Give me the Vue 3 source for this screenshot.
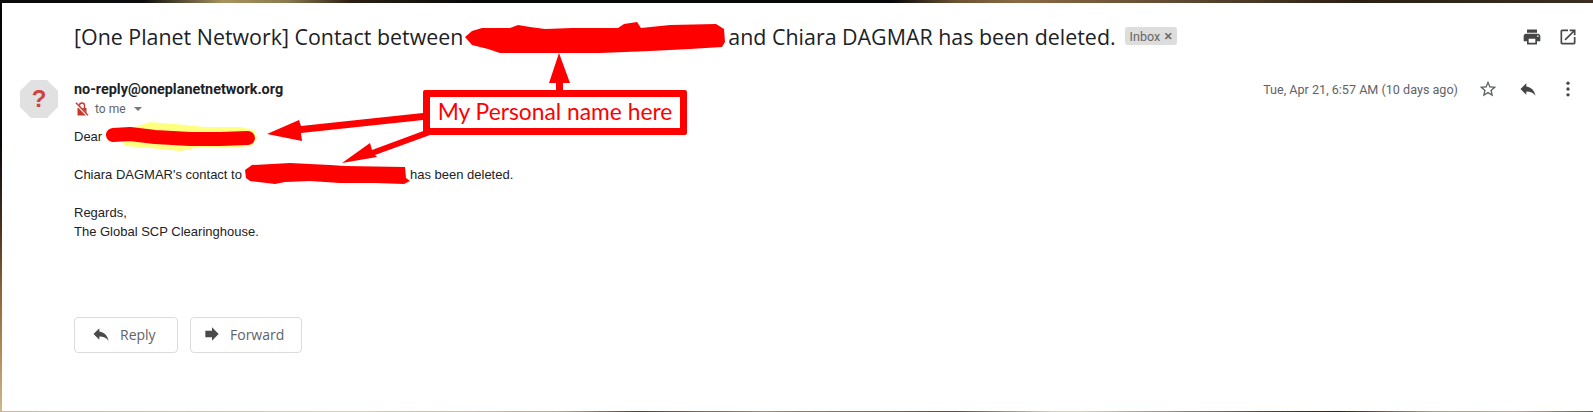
<script setup>
</script>

<template>
  <div class="frame">
    <div class="edge-top"></div>
    <div class="middle">
      <div class="edge-left"></div>
      <main class="mail">
        <header class="subject-row">
          <h1 class="subject">
            [One Planet Network] Contact between<span class="gap-subject"></span>and Chiara DAGMAR has been deleted.
          </h1>
          <span class="chip">Inbox<span class="chip-x">×</span></span>
          <div class="subject-actions">
            <svg class="icon print" viewBox="0 0 24 24"><path d="M19 8H5c-1.66 0-3 1.34-3 3v6h4v4h12v-4h4v-6c0-1.66-1.34-3-3-3zm-3 11H8v-5h8v5zm3-7c-.55 0-1-.45-1-1s.45-1 1-1 1 .45 1 1-.45 1-1 1zm-1-9H6v4h12V3z"/></svg>
            <svg class="icon print" viewBox="0 0 24 24"><path d="M19 19H5V5h7V3H5c-1.11 0-2 .9-2 2v14c0 1.1.89 2 2 2h14c1.1 0 2-.9 2-2v-7h-2v7zM14 3v2h3.59l-9.83 9.83 1.41 1.41L19 6.41V10h2V3h-7z"/></svg>
          </div>
        </header>

        <section class="message">
          <div class="avatar">
            <svg viewBox="0 0 38 38" width="38" height="38">
              <polygon points="11,0 27,0 38,11 38,27 27,38 11,38 0,27 0,11" fill="#e1e1e1"/>
            </svg>
            <span class="avatar-q">?</span>
          </div>
          <div class="content">
            <div class="sender-row">
              <div class="sender">no-reply@oneplanetnetwork.org</div>
              <div class="meta">
                <span class="date">Tue, Apr 21, 6:57 AM (10 days ago)</span>
                <svg class="icon meta-icon" viewBox="0 0 24 24"><path d="M22 9.24l-7.19-.62L12 2 9.19 8.63 2 9.24l5.46 4.73L5.82 21 12 17.27 18.18 21l-1.63-7.03L22 9.24zM12 15.4l-3.76 2.27 1-4.28-3.32-2.88 4.38-.38L12 6.1l1.71 4.04 4.38.38-3.32 2.88 1 4.28L12 15.4z"/></svg>
                <svg class="icon meta-icon dark" viewBox="0 0 24 24"><path d="M10 9V5l-7 7 7 7v-4.1c5 0 8.5 1.6 11 5.1-1-5-4-10-11-11z"/></svg>
                <svg class="icon meta-icon dark" viewBox="0 0 24 24"><circle cx="12" cy="5" r="2"/><circle cx="12" cy="12" r="2"/><circle cx="12" cy="19" r="2"/></svg>
              </div>
            </div>
            <div class="to-row">
              <svg class="lock" viewBox="0 0 14 14" width="14" height="14">
                <path d="M2.5 6h9v7.5h-9z" fill="#c5392c"/>
                <path d="M4.5 6V3.5a2.5 2.5 0 0 1 5 0V6" fill="none" stroke="#c5392c" stroke-width="1.4"/>
                <path d="M1 1.6l11.5 12" stroke="#fff" stroke-width="2.4"/>
                <path d="M1 .8l12 12.4" stroke="#c5392c" stroke-width="1.4"/>
              </svg>
              <span>to me</span>
              <span class="caret"></span>
            </div>
            <div class="body">
              <p>Dear<span class="gap-dear"></span></p>
              <p class="blank"></p>
              <p>Chiara DAGMAR's contact to<span class="gap-contact"></span>has been deleted.</p>
              <p class="blank"></p>
              <p>Regards,</p>
              <p>The Global SCP Clearinghouse.</p>
            </div>
            <div class="actions">
              <button class="action reply">
                <svg class="icon action-icon" viewBox="0 0 24 24"><path d="M10 9V5l-7 7 7 7v-4.1c5 0 8.5 1.6 11 5.1-1-5-4-10-11-11z"/></svg>
                Reply
              </button>
              <button class="action forward">
                <svg class="icon action-icon" viewBox="0 0 24 24"><path d="M12 8V4l8 8-8 8v-4H4V8z"/></svg>
                Forward
              </button>
            </div>
          </div>
        </section>
      </main>
    </div>
    <div class="edge-bottom"></div>

    <!-- red markup painted over the screenshot -->
    <svg class="markup" viewBox="0 0 1593 412" width="1593" height="412">
      <path fill="#ffff80" d="M117 131 L135 127 L150 122 L175 124 L205 127 L240 127 L254 130 L257 138 L252 146 L225 148 L200 147 L180 151 L150 148 L125 146 Z"/>
      <path fill="#f00" d="M465 37 L472 31 L482 28 L510 28 L518 25 L530 27 L545 29 L572 28 L590 28 L618 28 L624 24 L637 22 L641 28 L670 25 L716 24 L724 29 L725 42 L722 47 L690 49 L650 51 L600 53 L540 53 L500 53 L488 49 L472 45 Z"/>
      <polyline fill="none" stroke="#f00" stroke-width="14" stroke-linecap="round" stroke-linejoin="round" points="113,135 130,134 155,137 190,139 220,139 248,138"/>
      <path fill="#f00" d="M245 170 L252 165 L290 163 L330 165 L345 166 L405 167 L406 178 L410 181 L404 184 L375 183 L340 183 L310 181 L285 182 L275 184 L250 181 L246 178 Z"/>
      <path fill="#f00" d="M559 53 L570 83 L563 83 L563 92 L556 92 L556 83 L549 83 Z"/>
      <path fill="#f00" d="M267 134 L299 120 L301 126 L423 113 L423 120 L301 133 L302 141 Z"/>
      <path fill="#f00" d="M342 163 L370 143 L372 150 L426 130 L430 135 L375 155 L377 157 Z"/>
    </svg>
    <div class="callout">My Personal name here</div>
  </div>
</template>

<style>
html, body { margin: 0; background: #fff; }
</style>

<style scoped>
.frame { position: relative; width: 1593px; height: 412px; display: flex; flex-direction: column; overflow: hidden; font-family: Roboto, "Liberation Sans", sans-serif; color: #222; }

.edge-top { height: 3px; flex: none; background: linear-gradient(90deg, #0a0a0a 0%, #0c0d0e 9%, #a8925f 14%, #8a7a50 18%, #2a2012 22%, #07080a 30%, #07080a 56%, #6b5232 60%, #8a6a44 64%, #5a4630 75%, #2a1f14 85%, #3a2e24 100%); }
.middle { flex: 1; display: flex; min-height: 0; }
.edge-left { width: 2px; flex: none; background: linear-gradient(180deg, #050505 0%, #0b0908 35%, #4a3220 55%, #8e6233 70%, #b08a55 85%, #cdb88b 100%); }
.edge-bottom { height: 1px; flex: none; background: linear-gradient(90deg, #cdb88b 0%, #e3cfa0 22%, #c9a878 35%, #5c4022 40%, #a98a5a 48%, #6a4a28 60%, #e0cda6 66%, #e0cda6 68%, #5a3c20 80%, #2e2012 84%, #b8a070 90%, #c0ae86 95%, #6a5e52 100%); }

.mail { flex: 1; background: #fff; min-width: 0; }

.subject-row { display: flex; align-items: center; height: 66px; padding-left: 72px; }
.subject { margin: 0; font-family: "Open Sans", sans-serif; font-size: 21.4px; font-weight: 400; color: #202124; white-space: nowrap; }
.gap-subject { display: inline-block; width: 265px; }
.chip { margin-left: 9px; width: 52px; box-sizing: border-box; height: 18px; line-height: 18px; padding-left: 5px; background: #ddd; border-radius: 3px; font-size: 12.5px; color: #666; white-space: nowrap; }
.chip-x { font-size: 15px; margin-left: 4px; font-weight: 500; }
.subject-actions { margin-left: auto; display: flex; gap: 16px; padding-right: 15px; margin-top: 2px; }

.icon { width: 20px; height: 20px; display: block; }
.print { fill: #444746; }

.message { display: flex; padding: 10px 0 0 18px; }
.avatar { position: relative; width: 38px; height: 38px; flex: none; margin-right: 16px; margin-top: 1px; }
.avatar svg { display: block; }
.avatar-q { position: absolute; inset: 0; text-align: center; line-height: 38px; font-size: 24px; font-weight: 700; color: #d0433a; font-family: "Liberation Sans", sans-serif; }

.content { flex: 1; min-width: 0; }
.sender-row { display: flex; align-items: center; height: 20px; }
.sender { font-size: 14.4px; font-weight: 700; color: #202124; }
.meta { margin-left: auto; display: flex; align-items: center; padding-right: 15px; }
.date { font-size: 12.6px; color: #5f6368; margin-right: 20px; }
.meta-icon { width: 20px; height: 20px; margin-left: 20px; fill: #5f6368; }
.meta-icon:first-of-type { margin-left: 0; }
.meta-icon.dark { fill: #444; }

.to-row { display: flex; align-items: center; gap: 6px; height: 20px; font-size: 12px; color: #5f6368; padding-left: 1px; }
.caret { width: 0; height: 0; border-left: 4px solid transparent; border-right: 4px solid transparent; border-top: 4px solid #777; margin-left: 2px; }

.body { margin-top: 8px; font-family: "Liberation Sans", sans-serif; font-size: 13px; line-height: 19px; color: #222; }
.body p { margin: 0; height: 19px; }
.gap-dear { display: inline-block; width: 20px; }
.gap-contact { display: inline-block; width: 168px; }

.actions { display: flex; gap: 12px; margin-top: 76px; }
.action { display: flex; align-items: center; height: 36px; box-sizing: border-box; border: 1px solid #dadce0; border-radius: 4px; background: #fff; font-family: "Open Sans", sans-serif; font-size: 14px; font-weight: 500; color: #5f6368; padding: 0 0 2px; }
.reply { width: 104px; padding-left: 16px; gap: 9px; }
.forward { width: 112px; padding-left: 11px; gap: 8px; }
.action-icon { width: 20px; height: 20px; fill: #4a4a4a; }

.markup { position: absolute; top: 0; left: 0; pointer-events: none; }
.callout { position: absolute; left: 423px; top: 90px; width: 264px; height: 45px; box-sizing: border-box; border: 7px solid #f00; border-radius: 2px; background: #fff; color: #f00; font-family: Lato, sans-serif; font-size: 22.8px; line-height: 29px; text-align: center; white-space: nowrap; }
</style>
